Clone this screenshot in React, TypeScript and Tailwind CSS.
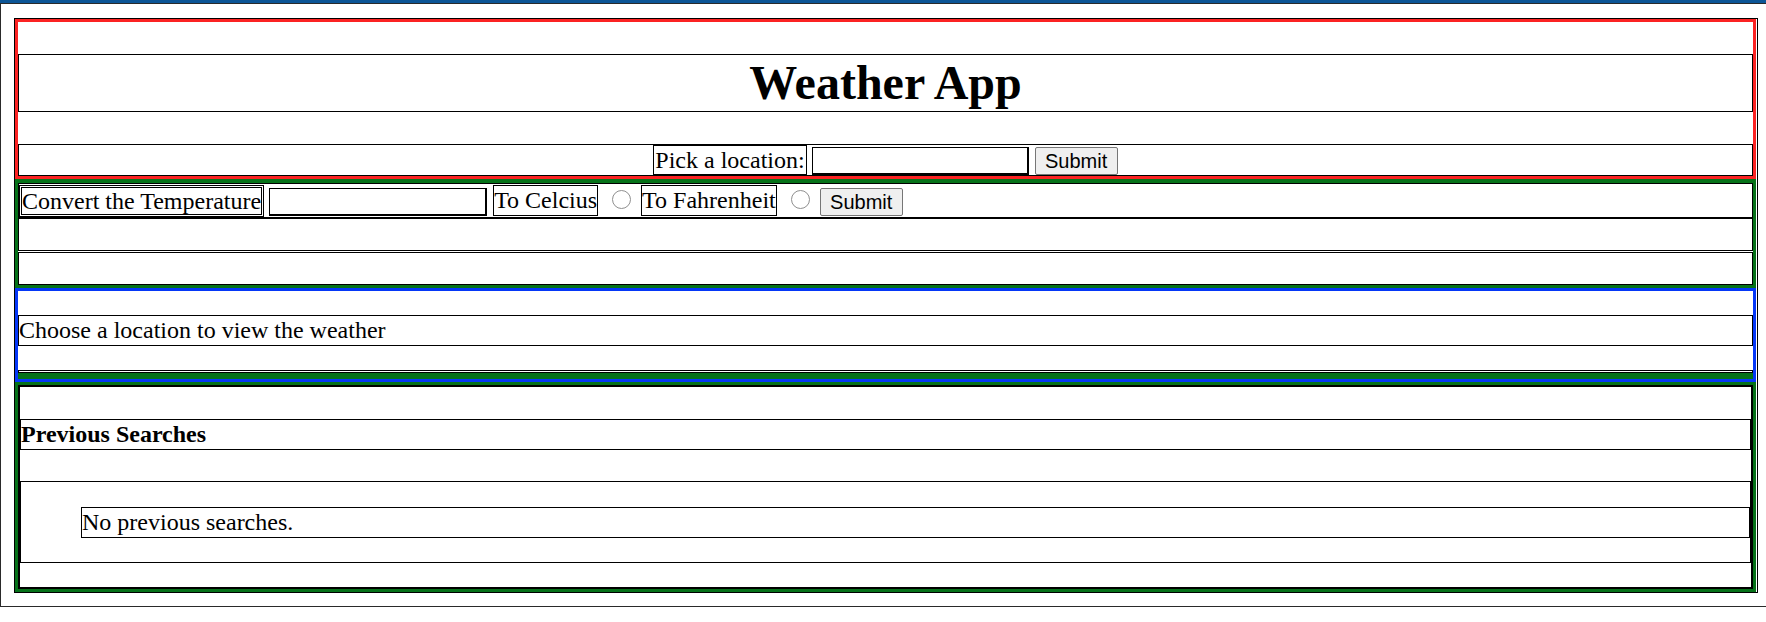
import React from 'react';

const serif = "font-['Liberation_Serif','Times_New_Roman',serif]";

function Radio() {
  return <span className="ml-[14px] mr-[10px] w-[19px] h-[19px] rounded-full border border-[#8f8f8f] bg-white shrink-0" />;
}

function SubmitButton() {
  return (
    <button className="flex items-center justify-center h-[28px] w-[83px] border border-[#767676] bg-[#efefef] rounded-[2px] font-['Liberation_Sans',Arial,sans-serif] text-[20px] leading-[22px] text-black">
      Submit
    </button>
  );
}

export default function App() {
  return (
    <div className={`w-[1766px] h-[622px] overflow-hidden bg-white text-black text-[24px] ${serif}`}>
      <div className="h-[3px] bg-[#0c5596]" />
      <div className="border-t border-l border-b border-[#2a2a2a] pt-[14px] pl-[13px] pr-[8px] pb-[13px]">
        <div className="border border-black">
          {/* header */}
          <div className="mr-px border-[3px] border-[#fb2323]">
            <h1 className="my-8 h-[58px] border border-black text-center text-[48px] font-bold leading-[56px]">Weather App</h1>
            <form className="h-[32px] border border-black flex justify-center items-start">
              <label className="h-[30px] border border-black px-px leading-[28px]">Pick a location:</label>
              <input className="ml-[5px] mt-[2px] w-[217px] h-[28px] border border-black border-b-2 border-r-2 bg-white" />
              <div className="ml-[6px] mt-[2px] flex"><SubmitButton /></div>
            </form>
          </div>

          {/* converter */}
          <div className="mr-px border-[3px] border-t-[4px] border-[#067219]">
            <form className="h-[35px] border border-black flex items-start">
              <label className="mt-px h-[32px] border border-black p-px">
                <span className="block h-[28px] border border-black leading-[26px]">Convert the Temperature</span>
              </label>
              <input className="ml-[5px] mt-[4px] w-[218px] h-[28px] border border-black border-b-2 border-r-2 bg-white" />
              <label className="ml-[6px] mt-px h-[31px] border border-black leading-[29px]">To Celcius</label>
              <div className="mt-[6px] flex"><Radio /></div>
              <label className="mt-px h-[31px] border border-black leading-[29px]">To Fahrenheit</label>
              <div className="mt-[6px] flex"><Radio /></div>
              <div className="mt-[4px] flex"><SubmitButton /></div>
            </form>
            <div className="h-[33px] border border-black" />
            <div className="mt-px h-[33px] border border-black" />
          </div>

          {/* weather */}
          <div className="mr-px border-[3px] border-[#0537f7]">
            <p className="my-6 h-[31px] border border-black leading-[29px]">Choose a location to view the weather</p>
            <div className="h-[3px] border border-black" />
            <div className="h-[6px] border-[3px] border-[#067219]" />
          </div>

          {/* history */}
          <div className="mr-px border-[3px] border-[#067219]">
            <div className="border border-black">
              <div className="border border-black">
                <h4 className="mt-8 mb-[31px] h-[31px] border border-black font-bold leading-[29px]">Previous Searches</h4>
                <ul className="mb-6 h-[82px] border border-black pl-[60px] list-none">
                  <li className="mt-[25px] h-[31px] border border-black leading-[29px]">No previous searches.</li>
                </ul>
              </div>
            </div>
          </div>
        </div>
      </div>
    </div>
  );
}
